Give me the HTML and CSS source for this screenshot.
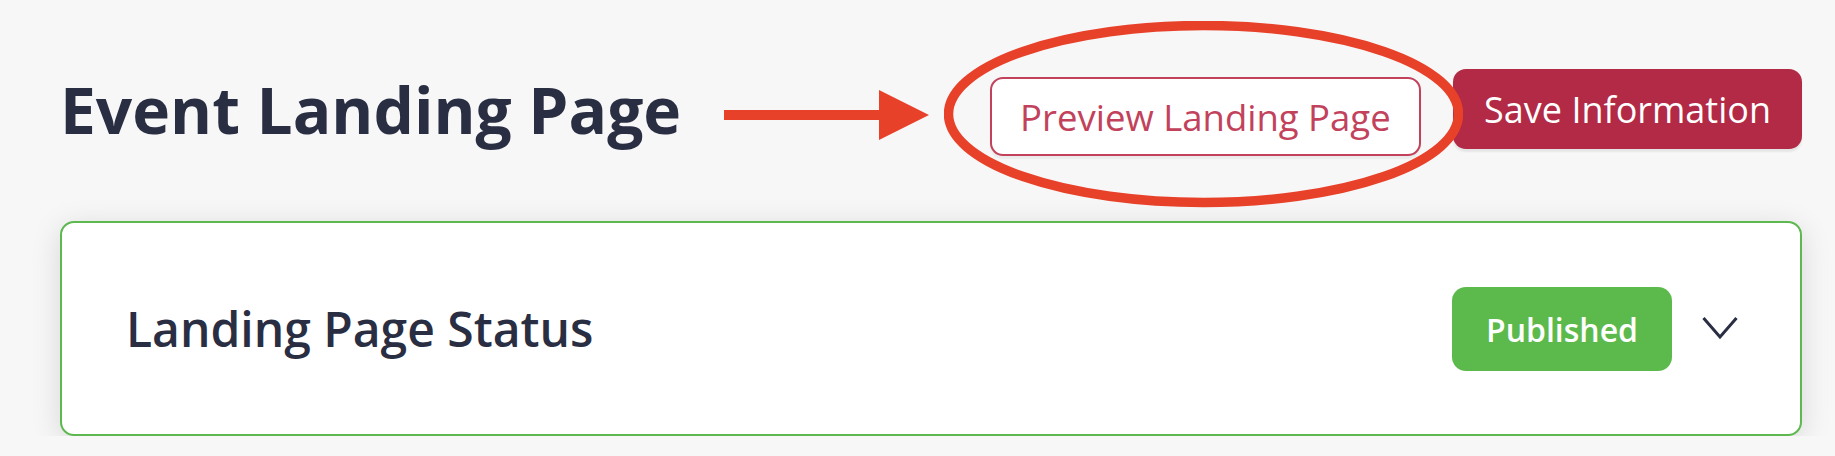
FILE: index.html
```html
<!DOCTYPE html>
<html lang="en">
<head>
    <title>Event Landing Page</title>
    <meta charset="UTF-8">
    <meta name="viewport" content="width=device-width, initial-scale=1.0">
    <link rel="stylesheet" href="styles.css">
</head>
<body>
    <div class="page">
        <div class="header">
            <h1>Event Landing Page</h1>

            <!-- annotation arrow -->
            <svg class="arrow" viewBox="0 0 205 50" xmlns="http://www.w3.org/2000/svg">
                <rect x="0" y="20" width="157" height="10"></rect>
                <polygon points="155,0 205,25 155,50"></polygon>
            </svg>

            <div class="preview-wrap">
                <button class="btn-preview">Preview Landing Page</button>
                <svg class="circle-mark" viewBox="0 0 519 187" xmlns="http://www.w3.org/2000/svg">
                    <ellipse cx="259.5" cy="93" rx="255" ry="88.5"></ellipse>
                </svg>
            </div>

            <button class="btn-save">Save Information</button>
        </div>

        <div class="status-card">
            <div class="status-title">Landing Page Status</div>
            <div class="status-actions">
                <span class="badge">Published</span>
                <svg class="chevron" viewBox="0 0 36 24" xmlns="http://www.w3.org/2000/svg">
                    <polyline points="1.5,2 18,21 34.5,2"></polyline>
                </svg>
            </div>
        </div>
    </div>
</body>
</html>
```

FILE: styles.css
```css
:root {
    --text-color: #2a2e43;
    --brand-color: #b22a45;
    --preview-color: #c2425c;
    --green: #5cb84f;
    --mark-color: #e8412a;
}

* {
    margin: 0;
    padding: 0;
    box-sizing: border-box;
}

body {
    font-family: "Open Sans", "Noto Sans", sans-serif;
    background-color: #f7f7f7;
    color: var(--text-color);
}

.page {
    padding: 50px 33px 0 60px;
}

.header {
    display: flex;
    align-items: center;
    height: 130px;
}

.header h1 {
    font-size: 64px;
    font-weight: 700;
    line-height: normal;
    margin-top: -11px;
}

.arrow {
    width: 205px;
    height: 50px;
    margin-left: 43px;
    fill: var(--mark-color);
}

.preview-wrap {
    position: relative;
    margin-left: 61px;
    margin-top: 3px;
}

.btn-preview {
    font-family: inherit;
    font-size: 36.5px;
    color: var(--preview-color);
    background: #fff;
    border: 2px solid var(--preview-color);
    border-radius: 13px;
    height: 79px;
    padding: 0 28px;
    cursor: pointer;
    box-shadow: 0 3px 2px rgba(0, 0, 0, 0.05);
}

.circle-mark {
    position: absolute;
    left: -46px;
    top: -56px;
    width: 519px;
    height: 187px;
    fill: none;
    stroke: var(--mark-color);
    stroke-width: 9.5;
    z-index: 2;
    pointer-events: none;
}

.btn-save {
    margin-left: auto;
    margin-top: -12px;
    font-family: inherit;
    font-size: 36px;
    color: #fff;
    background-color: var(--brand-color);
    border: none;
    border-radius: 13px;
    height: 80px;
    padding: 0 31px;
    cursor: pointer;
    box-shadow: 0 3px 2px rgba(0, 0, 0, 0.07);
}

.status-card {
    margin-top: 41px;
    height: 215px;
    background: #fff;
    border: 2px solid var(--green);
    border-radius: 14px;
    box-shadow: 0 6px 30px rgba(0, 0, 0, 0.13);
    display: flex;
    align-items: center;
    justify-content: space-between;
    padding: 0 62px 0 64px;
}

.status-title {
    font-size: 48px;
    font-weight: 600;
    line-height: normal;
}

.status-actions {
    display: flex;
    align-items: center;
    gap: 30px;
}

.badge {
    display: flex;
    align-items: center;
    justify-content: center;
    height: 84px;
    width: 220px;
    background-color: #5cba4c;
    color: #fff;
    font-size: 32px;
    font-weight: 600;
    border-radius: 14px;
    margin-top: 1px;
}

.chevron {
    width: 36px;
    height: 24px;
    fill: none;
    stroke: var(--text-color);
    stroke-width: 3;
    margin-top: -2px;
}
```
